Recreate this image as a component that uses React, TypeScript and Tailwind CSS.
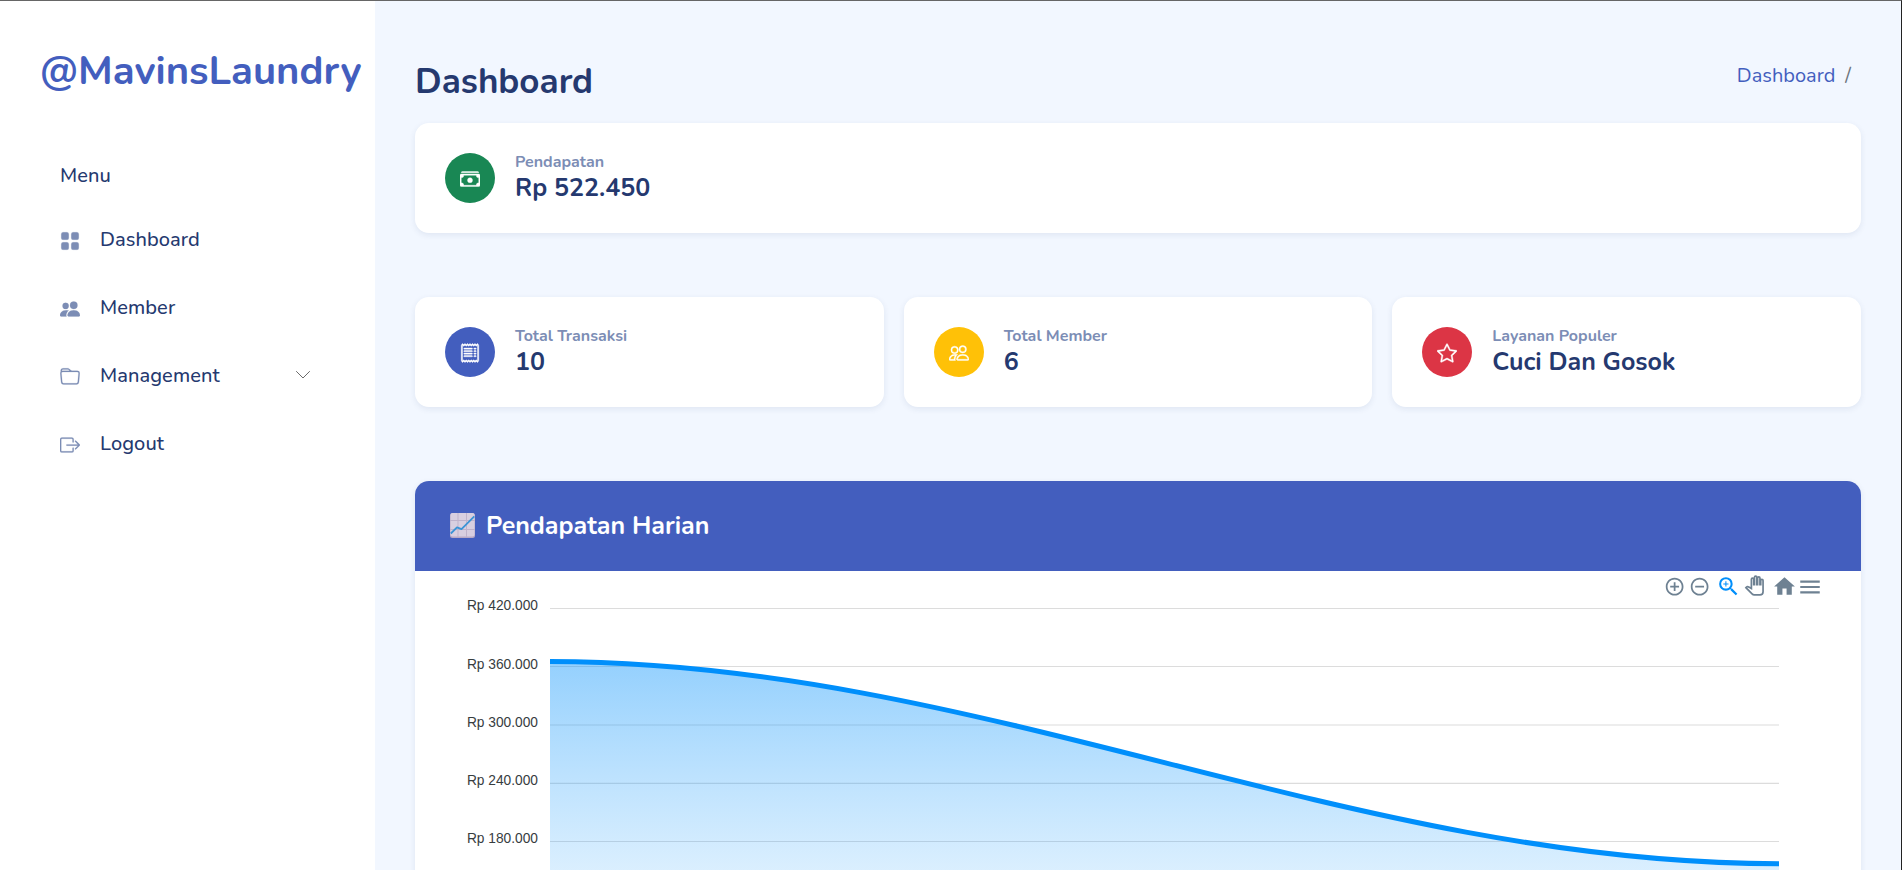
import React from "react";
import { BsGridFill, BsPeopleFill, BsFolder, BsBoxArrowRight, BsReceipt, BsPeople, BsStar, BsCashStack } from "react-icons/bs";
import { MdAddCircleOutline, MdRemoveCircleOutline, MdZoomIn, MdHome, MdMenu } from "react-icons/md";

type IconType = React.ComponentType<{ className?: string }>;

const menu: { label: string; icon: IconType; submenu?: boolean }[] = [
  { label: "Dashboard", icon: BsGridFill },
  { label: "Member", icon: BsPeopleFill },
  { label: "Management", icon: BsFolder, submenu: true },
  { label: "Logout", icon: BsBoxArrowRight },
];

const gridLines = [
  { label: "Rp 420.000", y: 608.5, textY: 610 },
  { label: "Rp 360.000", y: 666.5, textY: 669 },
  { label: "Rp 300.000", y: 725, textY: 727 },
  { label: "Rp 240.000", y: 783.4, textY: 785 },
  { label: "Rp 180.000", y: 841.5, textY: 843 },
];

function Sidebar() {
  return (
    <aside className="w-[375px] shrink-0 bg-white">
      <div className="pl-10 pt-10 text-[40px] leading-[60px] font-bold text-[#435ebe]">@MavinsLaundry</div>
      <nav className="pl-[60px] pt-[60px] text-[20px] leading-[30px] font-medium tracking-[0.08px] text-[#25396f]">
        <div>Menu</div>
        <ul className="mt-[15px]">
          {menu.map(({ label, icon: Icon, submenu }) => (
            <li key={label} className="flex h-17 items-center">
              <Icon className="mt-0.5 h-5 w-5 stroke-[#7c8db5] stroke-[0.15px] text-[#7c8db5]" />
              <span className="ml-5">{label}</span>
              {submenu && (
                <svg className="-mt-0.5 mr-[64px] ml-auto" width="16" height="10" viewBox="0 0 16 10" fill="none" stroke="#6b6b6b" strokeWidth="1">
                  <path d="M1.2 1.2 8 8l6.8-6.8" />
                </svg>
              )}
            </li>
          ))}
        </ul>
      </nav>
    </aside>
  );
}

function StatCard({ icon: Icon, color, label, value }: { icon: IconType; color: string; label: string; value: string }) {
  return (
    <div className="flex h-[110px] items-start rounded-[14px] bg-white p-[30px] shadow-[0_2px_6px_rgba(37,57,111,0.09)]">
      <div className={`flex h-[50px] w-[50px] items-center justify-center rounded-full ${color}`}>
        <Icon className="mt-[2px] h-5 w-5 stroke-white stroke-[0.3px] text-white" />
      </div>
      <div className="ml-5">
        <div className="text-[16px] leading-[19px] font-bold text-[#7c8db5]">{label}</div>
        <div className="mt-px text-[25px] leading-[30px] font-bold text-[#25396f]">{value}</div>
      </div>
    </div>
  );
}

function ChartEmoji() {
  return (
    <svg className="-mt-px" width="25" height="25" viewBox="0 0 25 25" fill="none">
      <rect width="25" height="25" rx="2.5" fill="#b9aac6" />
      <rect x="0.5" width="24" height="23.5" rx="2" fill="#d8cfe0" />
      <path d="M8 0v24M16.5 0v24M0 7.5h25M0 16.5h25" stroke="#bfb3cb" strokeWidth="1" />
      <path d="M.8 20.5 7 14.3l4.5 1.9L24.3 3.4" stroke="#3a93d6" strokeWidth="1.8" strokeLinejoin="round" />
    </svg>
  );
}

function Toolbar() {
  return (
    <div className="flex h-7 items-center pt-[3px] pr-[38px] text-[#6e8192]">
      <MdAddCircleOutline className="ml-auto h-[21.25px] w-[21.25px]" />
      <MdRemoveCircleOutline className="ml-[3.75px] h-[21.25px] w-[21.25px]" />
      <MdZoomIn className="ml-[6px] h-[25px] w-[25px] text-[#008ffb]" />
      <svg className="-mt-[2px] ml-[3px] h-[21px] w-[21px]" viewBox="-1.5 -1.5 27 27" fill="#fff" stroke="#6e8192" strokeWidth="2.2">
        <path d="M23 5.5V20c0 2.2-1.8 4-4 4h-7.3c-1.08 0-2.1-.43-2.85-1.19L1 14.83s1.26-1.23 1.3-1.25c.22-.19.49-.29.79-.29.22 0 .42.06.6.16.04.01 4.31 2.46 4.31 2.46V4c0-.83.67-1.5 1.5-1.5S11 3.17 11 4v7h1V1.5c0-.83.67-1.5 1.5-1.5S15 .67 15 1.5V11h1V2.5c0-.83.67-1.5 1.5-1.5s1.5.67 1.5 1.5V11h1V5.5c0-.83.67-1.5 1.5-1.5s1.5.67 1.5 1.5z" />
      </svg>
      <MdHome className="ml-[7px] h-[25px] w-[25px]" />
      <MdMenu className="h-[26px] w-[26px]" />
    </div>
  );
}

function RevenueChart() {
  const curve = "M550 661.5C980.15 661.5 1348.85 863.7 1779 863.7";
  return (
    <svg className="block" width="1446" height="271" viewBox="415 599 1446 271">
      <defs>
        <linearGradient id="area" gradientUnits="userSpaceOnUse" x1="0" y1="661.5" x2="0" y2="1016">
          <stop offset="0" stopColor="#008ffb" stopOpacity="0.42" />
          <stop offset="0.6" stopColor="#2ba2fc" stopOpacity="0.17" />
          <stop offset="1" stopColor="#80c7fd" stopOpacity="0.1" />
        </linearGradient>
      </defs>
      {gridLines.map(({ label, y, textY }) => (
        <g key={label}>
          <path d={`M550 ${y}H1779`} stroke="#dcdcdc" strokeWidth="1.1" />
          <text x="538" y={textY} textAnchor="end" fontSize="13.75" fill="#373d3f" fontFamily="'Liberation Sans', Helvetica, Arial, sans-serif">
            {label}
          </text>
        </g>
      ))}
      <path d={`${curve}V1016H550Z`} fill="url(#area)" />
      <path d={curve} fill="none" stroke="#008ffb" strokeWidth="5" />
    </svg>
  );
}

export default function App() {
  return (
    <div className="flex h-[870px] w-[1902px] overflow-hidden border-t border-r border-t-[#666] border-r-[#222] bg-[#f2f7ff] font-['Nunito','Lato',sans-serif]">
      <Sidebar />
      <main className="flex-1 pr-10 pl-10">
        <header className="flex h-[122px] items-start justify-between">
          <h1 className="pt-[60px] text-[35px] leading-[42px] font-bold text-[#25396f]">Dashboard</h1>
          <div className="flex gap-2.5 pt-[60px] pr-2.5 text-[20px] leading-[30px] text-[#435ebe]">
            <span>Dashboard</span>
            <span className="text-[#6c757d]">/</span>
          </div>
        </header>
        <StatCard icon={BsCashStack} color="bg-[#198754]" label="Pendapatan" value="Rp 522.450" />
        <div className="mt-16 grid grid-cols-3 gap-5">
          <StatCard icon={BsReceipt} color="bg-[#435ebe]" label="Total Transaksi" value="10" />
          <StatCard icon={BsPeople} color="bg-[#ffc107]" label="Total Member" value="6" />
          <StatCard icon={BsStar} color="bg-[#dc3545]" label="Layanan Populer" value="Cuci Dan Gosok" />
        </div>
        <section className="mt-[74px] h-[600px] overflow-hidden rounded-[14px] bg-white shadow-[0_2px_6px_rgba(37,57,111,0.09)]">
          <div className="flex h-[90px] items-center gap-[11px] bg-[#435ebe] pl-[35px]">
            <ChartEmoji />
            <h2 className="text-[25px] leading-[30px] font-bold text-white">Pendapatan Harian</h2>
          </div>
          <Toolbar />
          <RevenueChart />
        </section>
      </main>
    </div>
  );
}
